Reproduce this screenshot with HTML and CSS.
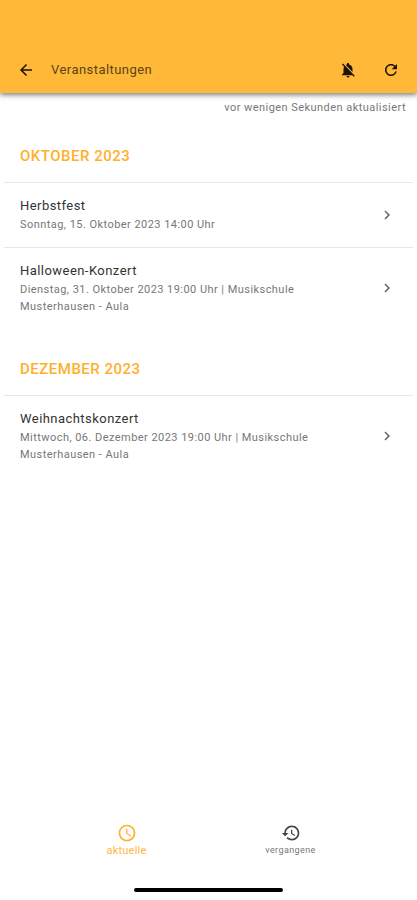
FILE: index.html
```
<!DOCTYPE html>
<html lang="de">

<head>
  <meta charset="UTF-8" />
  <title>Veranstaltungen</title>
  <meta name="viewport" content="width=device-width, initial-scale=1.0">
  <link rel="stylesheet" href="styles.css">
</head>

<body>
  <header class="app-bar">
    <svg class="icon" viewBox="0 0 24 24"><path d="M20 11H7.83l5.59-5.59L12 4l-8 8 8 8 1.41-1.41L7.83 13H20z" /></svg>
    <h1>Veranstaltungen</h1>
    <svg class="icon" viewBox="0 0 24 24"><path d="M20 18.69L7.84 6.14 5.27 3.49 4 4.76l2.8 2.8v.01c-.52.99-.8 2.16-.8 3.42v5l-2 2v1h13.73l2 2L21 19.72l-1-1.03zM12 22c1.11 0 2-.89 2-2h-4c0 1.11.89 2 2 2zm6-7.32V11c0-3.08-1.64-5.64-4.5-6.32V4c0-.83-.67-1.5-1.5-1.5s-1.5.67-1.5 1.5v.68c-.15.03-.29.08-.42.12-.1.03-.2.07-.3.11-.24.1-.47.22-.69.35L18 14.68z" /></svg>
    <svg class="icon" viewBox="0 0 24 24"><path d="M17.65 6.35C16.2 4.9 14.21 4 12 4c-4.42 0-7.99 3.58-7.99 8s3.57 8 7.99 8c3.73 0 6.84-2.55 7.73-6h-2.08c-.82 2.33-3.04 4-5.65 4-3.31 0-6-2.69-6-6s2.69-6 6-6c1.66 0 3.14.69 4.22 1.78L13 11h7V4l-2.35 2.35z" /></svg>
  </header>

  <main class="content">
    <p class="updated">vor wenigen Sekunden aktualisiert</p>

    <section>
      <h2>OKTOBER 2023</h2>
      <ul class="events">
        <li>
          <div class="event">
            <h3>Herbstfest</h3>
            <p>Sonntag, 15. Oktober 2023 14:00 Uhr</p>
          </div>
          <svg class="chevron" viewBox="0 0 24 24"><path d="M10 6L8.59 7.41 13.17 12l-4.58 4.59L10 18l6-6z" /></svg>
        </li>
        <li>
          <div class="event">
            <h3>Halloween-Konzert</h3>
            <p>Dienstag, 31. Oktober 2023 19:00 Uhr | Musikschule<br>Musterhausen - Aula</p>
          </div>
          <svg class="chevron" viewBox="0 0 24 24"><path d="M10 6L8.59 7.41 13.17 12l-4.58 4.59L10 18l6-6z" /></svg>
        </li>
      </ul>
    </section>

    <section>
      <h2>DEZEMBER 2023</h2>
      <ul class="events">
        <li>
          <div class="event">
            <h3>Weihnachtskonzert</h3>
            <p>Mittwoch, 06. Dezember 2023 19:00 Uhr | Musikschule<br>Musterhausen - Aula</p>
          </div>
          <svg class="chevron" viewBox="0 0 24 24"><path d="M10 6L8.59 7.41 13.17 12l-4.58 4.59L10 18l6-6z" /></svg>
        </li>
      </ul>
    </section>
  </main>

  <nav class="tabs">
    <a class="tab active">
      <svg viewBox="0 0 24 24"><path d="M11.99 2C6.47 2 2 6.48 2 12s4.47 10 9.99 10C17.52 22 22 17.52 22 12S17.52 2 11.99 2zM12 20c-4.42 0-8-3.58-8-8s3.58-8 8-8 8 3.58 8 8-3.58 8-8 8zm.5-13H11v6l5.25 3.15.75-1.23-4.5-2.67z" /></svg>
      <span>aktuelle</span>
    </a>
    <a class="tab">
      <svg viewBox="0 0 24 24"><path d="M13 3c-4.97 0-9 4.03-9 9H1l3.89 3.89.07.14L9 12H6c0-3.87 3.13-7 7-7s7 3.13 7 7-3.13 7-7 7c-1.93 0-3.68-.79-4.94-2.06l-1.42 1.42C8.27 19.99 10.51 21 13 21c4.97 0 9-4.03 9-9s-4.03-9-9-9zm-1 5v5l4.28 2.54.72-1.21-3.5-2.08V8H12z" /></svg>
      <span>vergangene</span>
    </a>
  </nav>
  <div class="home-indicator"></div>
</body>

</html>
```
FILE: styles.css
```
* {
  box-sizing: border-box;
}

body {
  margin: 0;
  height: 100vh;
  display: flex;
  flex-direction: column;
  background: #fff;
  color: #333;
  font-family: Roboto, "Liberation Sans", sans-serif;
  overflow: hidden;
}

h1,
h2,
h3,
p,
ul {
  margin: 0;
  padding: 0;
  font-weight: normal;
}

.app-bar {
  height: 93px;
  padding: 47px 17px 0;
  display: flex;
  align-items: center;
  background: #ffb838;
  box-shadow: 0 2px 5px rgba(0, 0, 0, 0.5);
}

.app-bar h1 {
  flex: 1;
  margin-left: 16px;
  padding-bottom: 2px;
  font-size: 13px;
  letter-spacing: 0.45px;
  color: #5c4316;
}

.icon {
  width: 18px;
  height: 18px;
  fill: #1c1408;
}

.icon + .icon {
  margin-left: 25px;
}

.content {
  flex: 1;
}

.updated {
  height: 23px;
  padding: 7px 11px 0 0;
  font-size: 11px;
  line-height: 16px;
  letter-spacing: 0.45px;
  text-align: right;
  color: #777;
}

h2 {
  height: 66px;
  padding: 30px 20px 0;
  font-size: 15px;
  line-height: 20px;
  font-weight: 500;
  letter-spacing: 0.5px;
  color: #ffb02a;
}

.events {
  list-style: none;
  margin: 0 4px;
}

.events li {
  display: flex;
  align-items: center;
  padding: 13px 17px 14px 16px;
  border-top: 1px solid #e8e8e8;
}

.event {
  flex: 1;
}

.event h3 {
  font-size: 13px;
  line-height: 20px;
  letter-spacing: 0.45px;
  color: #333;
}

.event p {
  font-size: 11px;
  line-height: 17px;
  letter-spacing: 0.45px;
  color: #777;
}

.chevron {
  width: 18px;
  height: 18px;
  fill: #666;
}

.tabs {
  display: flex;
  justify-content: center;
  height: 65px;
}

.tab {
  width: 164px;
  display: flex;
  flex-direction: column;
  align-items: center;
  font-size: 9px;
  line-height: 15px;
  letter-spacing: 0.4px;
  color: #777;
}

.tab svg {
  width: 20px;
  height: 20px;
  fill: #444;
}

.tab.active {
  font-size: 11px;
  letter-spacing: 0.2px;
  color: #ffb645;
}

.tab.active svg {
  fill: #ffb02a;
}

.home-indicator {
  width: 149px;
  height: 4px;
  margin: 0 auto 8px;
  border-radius: 2px;
  background: #000;
}
```
